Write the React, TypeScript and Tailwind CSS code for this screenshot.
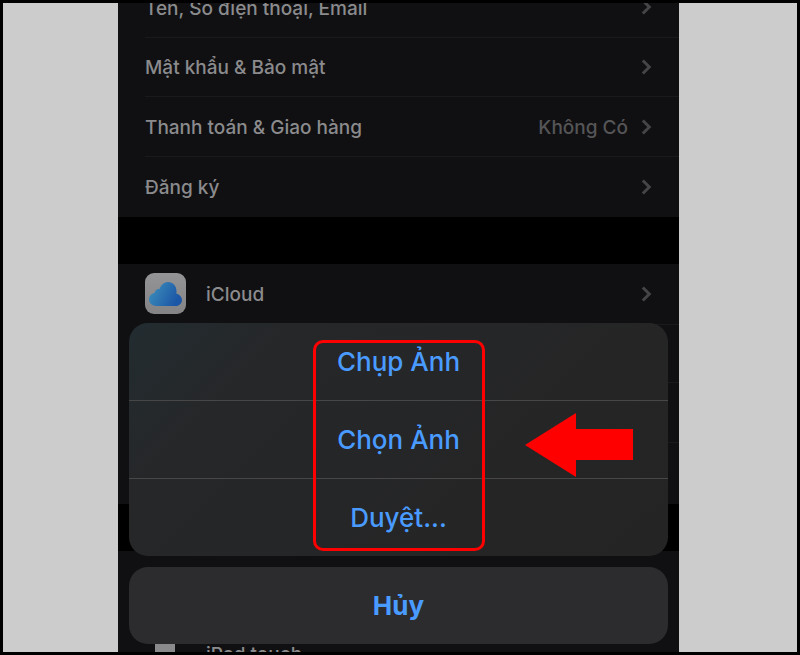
const font = { fontFamily: '"Inter", "Liberation Sans", sans-serif' };

function Chevron() {
  return (
    <svg width="11" height="16" viewBox="0 0 11 16" fill="none" className="shrink-0">
      <path d="M1.8 1.5 L8.3 8 L1.8 14.5" stroke="#454547" strokeWidth="3" />
    </svg>
  );
}

function Row({ label, value, last }: { label: string; value?: string; last?: boolean }) {
  return (
    <div className="h-[59.7px] pl-[27px] bg-[#101012]">
      <div className={`h-full flex items-center pr-[27px] ${last ? "" : "border-b border-[#1a1a1c]"}`}>
        <span className="text-[19px] font-medium text-[#8b8b8d] flex-1 pt-[3px]">{label}</span>
        {value && <span className="text-[19px] font-medium text-[#555557] mr-[13px] pt-[3px]">{value}</span>}
        <Chevron />
      </div>
    </div>
  );
}

function Cloud() {
  return (
    <div className="w-[41px] h-[41px] rounded-[9px] bg-[linear-gradient(#949496,#848486)] flex items-center justify-center shrink-0">
      <svg width="33" height="24" viewBox="0 0 33 24">
        <defs>
          <linearGradient id="c" x1="0" y1="0" x2="1" y2="0.4">
            <stop offset="0" stopColor="#3f94bd" />
            <stop offset="1" stopColor="#1c56a6" />
          </linearGradient>
        </defs>
        <path
          d="M7.5 24 C3 24 0 21 0 17.5 C0 14 2.5 11.5 5.5 11 C6 8 8.5 6.5 10.5 7 C12 3 15 0 19 0 C24 0 27.5 4 27.5 9 C27.5 10 27.5 10.5 27.3 11.5 C30.5 12.5 33 15 33 18 C33 21.5 30 24 27 24 Z"
          fill="url(#c)"
        />
      </svg>
    </div>
  );
}

function Action({ label, line }: { label: string; line?: boolean }) {
  return (
    <div className={`flex-1 flex items-center justify-center text-[26px] font-medium text-[#4a9bff] ${line ? "border-b border-[#474747]" : ""}`}>
      {label}
    </div>
  );
}

export default function App() {
  return (
    <div className="w-[800px] h-[655px] bg-black p-[3px] flex overflow-hidden" style={font}>
      <div className="w-[115px] bg-[#cccccc]" />
      <div className="w-[561px] relative overflow-hidden bg-black">
        <div className="-mt-[25px]">
          <Row label="Tên, Số điện thoại, Email" />
          <Row label="Mật khẩu & Bảo mật" />
          <Row label="Thanh toán & Giao hàng" value="Không Có" />
          <Row label="Đăng ký" last />
          <div className="h-[47px] bg-black" />
          <div className="bg-[#101012] pl-[27px] h-[60px] flex items-center pr-[27px]">
            <Cloud />
            <span className="text-[19px] font-medium text-[#8b8b8d] flex-1 ml-[20px] pt-[3px]">iCloud</span>
            <Chevron />
          </div>
          <div className="h-[180px] bg-[#101012] flex flex-col">
            <div className="h-[59px] ml-[27px] border-t border-b border-[#1a1a1c]" />
            <div className="h-[60px] ml-[27px] border-b border-[#1a1a1c]" />
          </div>
          <div className="h-[47px] bg-black" />
          <div className="bg-[#101012] pl-[37px] h-[110px] flex items-start pt-[89px]">
            <div className="w-[20px] h-[20px] rounded-[4px] bg-[#8a8a8c]" />
            <span className="text-[19px] font-medium text-[#8b8b8d] ml-[31px] mt-[1px]">iPad touch</span>
          </div>
        </div>

        <div className="absolute left-[11px] top-[320px] w-[539px] h-[233px] rounded-[19px] bg-[linear-gradient(135deg,#222c30_0%,#262729_22%,#242424_100%)] flex flex-col">
          <Action label="Chụp Ảnh" line />
          <Action label="Chọn Ảnh" line />
          <Action label="Duyệt..." />
        </div>
        <div className="absolute left-[11px] top-[564px] w-[539px] h-[77px] rounded-[19px] bg-[#2c2c2e] flex items-center justify-center text-[26px] font-bold text-[#4a9bff]">
          Hủy
        </div>

        <div className="absolute left-[195px] top-[337px] w-[172px] h-[211px] rounded-[10px] border-[3px] border-[#ff0000]" />
        <svg className="absolute left-[407px] top-[410px]" width="109" height="64" viewBox="0 0 109 64">
          <path d="M0 32 L51 0 L51 16 L108 16 L108 47 L51 47 L51 64 Z" fill="#ff0000" />
        </svg>
      </div>
      <div className="w-[118px] bg-[#cccccc]" />
    </div>
  );
}
